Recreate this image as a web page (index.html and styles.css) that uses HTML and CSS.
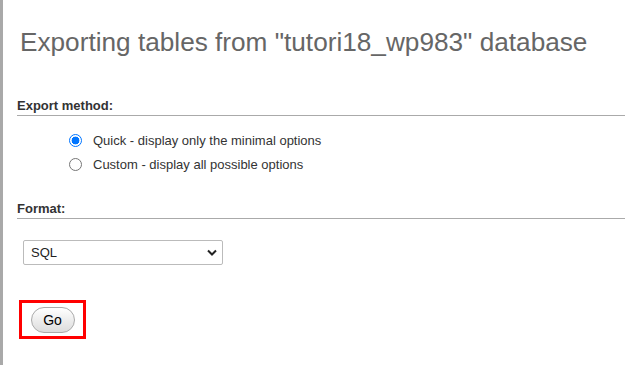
FILE: index.html
```html
<!DOCTYPE html>
<html>
<head>
<meta charset="utf-8">
<link rel="stylesheet" href="styles.css">
</head>
<body>
<div class="page">
  <h2 class="title">Exporting tables from "tutori18_wp983" database</h2>
  <div class="section">
    <h3 class="section-head">Export method:</h3>
    <ul class="options">
      <li class="option"><span class="radio checked"></span><span>Quick - display only the minimal options</span></li>
      <li class="option"><span class="radio"></span><span>Custom - display all possible options</span></li>
    </ul>
  </div>
  <div class="section">
    <h3 class="section-head">Format:</h3>
    <div class="select">
      <span>SQL</span>
      <svg class="chev" width="10" height="7" viewBox="0 0 10 7"><path d="M1 1.5 L5 5.5 L9 1.5" fill="none" stroke="#222" stroke-width="2"/></svg>
    </div>
  </div>
  <div class="go-wrap">
    <button class="go">Go</button>
  </div>
</div>
</body>
</html>
```

FILE: styles.css
```css
html, body {
  margin: 0;
  padding: 0;
  background: #fff;
}
body {
  font-family: "Liberation Sans", Arial, sans-serif;
  font-size: 13px;
  color: #333;
}
.page {
  border-left: 3px solid #a9a9a9;
  min-height: 365px;
  box-sizing: border-box;
  padding-left: 14px;
}
.title {
  margin: 0;
  padding: 27px 0 0 3px;
  font-size: 26.2px;
  font-weight: normal;
  color: #666;
  line-height: 30px;
}
.section {
  margin-top: 41px;
}
.section + .section {
  margin-top: 25px;
}
.section-head {
  margin: 0;
  font-size: 13px;
  font-weight: bold;
  color: #333;
  line-height: 15px;
  padding-bottom: 2px;
  border-bottom: 1px solid #aaa;
}
.options {
  list-style: none;
  margin: 0;
  padding: 12px 0 0 52px;
}
.option {
  display: flex;
  align-items: center;
  gap: 11px;
  height: 24px;
  color: #333;
}
.radio {
  width: 11px;
  height: 11px;
  border: 1px solid #767676;
  border-radius: 50%;
  box-sizing: content-box;
  flex: none;
}
.radio.checked {
  border: 1px solid #0075ff;
  background: radial-gradient(circle, #0075ff 0 3.6px, #fff 4.2px);
}
.select {
  margin: 21px 0 0 6px;
  width: 200px;
  height: 25px;
  box-sizing: border-box;
  border: 1px solid #bbb;
  border-radius: 2px;
  display: flex;
  align-items: center;
  justify-content: space-between;
  padding: 0 5px 0 7px;
  color: #222;
}
.go-wrap {
  margin-top: 35px;
  margin-left: 2px;
  width: 67px;
  height: 39px;
  box-sizing: border-box;
  border: 3px solid #ff0000;
  display: flex;
  align-items: center;
  justify-content: center;
}
.go {
  width: 44px;
  height: 26px;
  border: 1px solid #aaa;
  border-radius: 13px;
  background: linear-gradient(#ffffff, #dcdcdc);
  font-family: "Liberation Sans", Arial, sans-serif;
  font-size: 14px;
  color: #000;
  padding: 0;
  margin-top: 1px;
}
```
